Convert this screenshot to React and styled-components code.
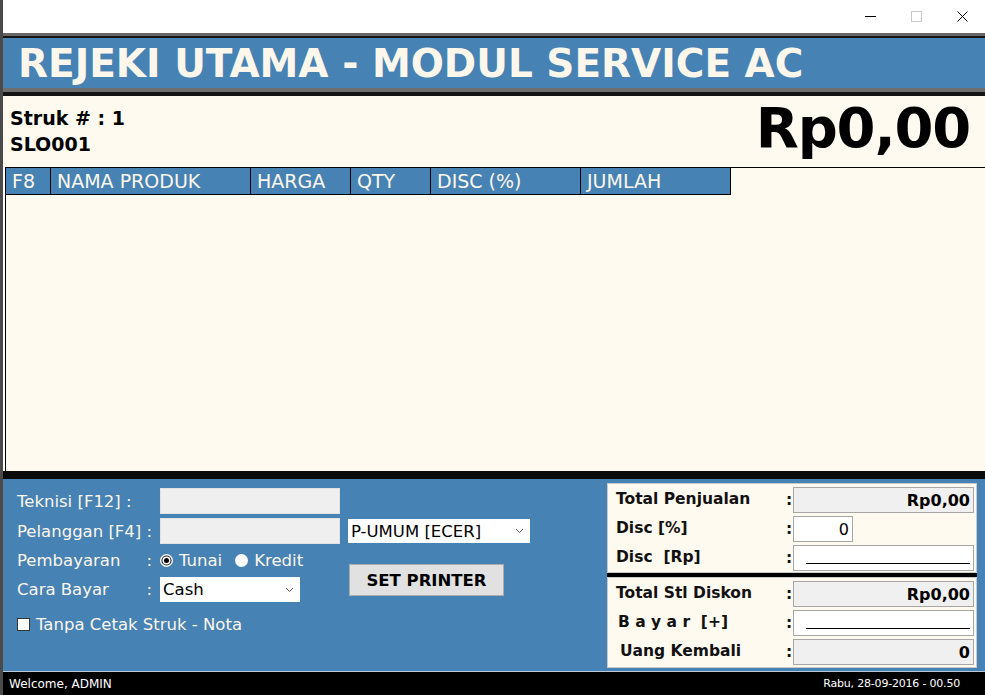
import React from "react";
import styled, { createGlobalStyle } from "styled-components";

const BLUE = "#4682b4";
const CREAM = "#fffaf0";
const LIGHT = "#fdf6ea";

const GlobalStyle = createGlobalStyle`
  html, body { margin: 0; padding: 0; background: #fff; }
  body { font-family: "DejaVu Sans", "Noto Sans", sans-serif; }
  #root { width: 985px; height: 695px; overflow: hidden; }
  * { box-sizing: border-box; }
`;

const Window = styled.div`
  width: 985px;
  height: 695px;
  display: flex;
  flex-direction: column;
  border-left: 3px solid #4a4a4a;
  background: #fff;
`;

const TitleBar = styled.div`
  height: 33px;
  flex: none;
  display: flex;
  justify-content: flex-end;
  background: #fff;
`;

const CtrlBtn = styled.div`
  width: 46px;
  height: 33px;
  display: flex;
  align-items: center;
  justify-content: center;
`;

const Header = styled.div`
  height: 63px;
  flex: none;
  background: ${BLUE};
  border-top: 3px solid #666;
  border-bottom: 4px solid #141414;
  box-shadow: inset 0 2px 0 #141414, inset 0 -4px 0 #6e6e6e;
  display: flex;
  align-items: center;
  padding: 0 0 1px 15px;
`;

const HeaderTitle = styled.h1`
  margin: 0;
  font-family: "DejaVu Sans", sans-serif;
  font-weight: bold;
  font-size: 39px;
  color: ${LIGHT};
  line-height: 1;
`;

const Info = styled.div`
  height: 71px;
  flex: none;
  background: ${CREAM};
  display: flex;
  justify-content: space-between;
  padding: 0 15px 0 7px;
`;

const InfoLeft = styled.div`
  padding-top: 9px;
  display: flex;
  flex-direction: column;
`;

const InfoLine = styled.div`
  font-weight: bold;
  font-size: 19px;
  line-height: 26px;
  color: #000;
`;

const BigTotal = styled.div`
  font-weight: bold;
  font-size: 56px;
  letter-spacing: -1.2px;
  line-height: 1;
  color: #000;
  align-self: center;
  margin-top: -7px;
`;

const GridArea = styled.div`
  flex: 1;
  margin-left: 2px;
  background: ${CREAM};
  border-left: 1px solid #000;
  border-top: 1px solid #000;
`;

const GridHeader = styled.div`
  display: flex;
  width: max-content;
  height: 27px;
  border-bottom: 1px solid #000;
`;

const HeadCell = styled.div`
  width: ${(p) => p.$w}px;
  background: ${BLUE};
  border-right: 1px solid #000;
  color: ${LIGHT};
  font-size: 19px;
  line-height: 26px;
  padding-left: 6px;
  white-space: nowrap;
`;

const BottomPanel = styled.div`
  height: 200px;
  flex: none;
  background: ${BLUE};
  border-top: 8px solid #0a0a0a;
  display: flex;
  justify-content: space-between;
  padding: 4px 8px 0 14px;
`;

const Form = styled.div`
  padding-top: 5px;
  display: flex;
  flex-direction: column;
`;

const FormGrid = styled.div`
  display: grid;
  grid-template-columns: 143px 180px 8px 182px;
  grid-template-rows: 26px 26px 25px 25px;
  row-gap: 4px;
`;

const Label = styled.div`
  grid-column: 1;
  grid-row: ${(p) => p.$row};
  display: flex;
  align-items: center;
  justify-content: space-between;
  padding-right: 8px;
  color: ${LIGHT};
  font-size: 16.5px;
  white-space: nowrap;
`;

const TextBox = styled.div`
  grid-column: 2;
  grid-row: ${(p) => p.$row};
  width: 180px;
  background: #efefef;
  border: 1px solid #e2e2e2;
`;

const Select = styled.div`
  grid-column: ${(p) => p.$col};
  grid-row: ${(p) => p.$row};
  width: ${(p) => p.$w}px;
  height: ${(p) => p.$h}px;
  align-self: center;
  background: #fff;
  display: flex;
  align-items: center;
  justify-content: space-between;
  padding: 0 6px 0 3px;
  color: #000;
  font-size: 16.5px;
  white-space: nowrap;
`;

const RadioGroup = styled.div`
  grid-column: 2;
  grid-row: 3;
  display: flex;
  align-items: center;
  color: ${LIGHT};
  font-size: 16.5px;
  white-space: nowrap;
`;

const RadioItem = styled.label`
  display: flex;
  align-items: center;
  gap: 6px;
  margin-right: 13px;
`;

const RadioDot = styled.span`
  width: 13px;
  height: 13px;
  border-radius: 50%;
  background: #fff;
  display: flex;
  align-items: center;
  justify-content: center;
  &::after {
    content: "";
    display: ${(p) => (p.$checked ? "block" : "none")};
    width: 5px;
    height: 5px;
    border-radius: 50%;
    background: #000;
    box-shadow: 0 0 0 1.5px #fff, 0 0 0 2.6px #222;
  }
`;

const Button = styled.div`
  grid-column: 4;
  grid-row: 3 / span 2;
  align-self: start;
  margin: 16px 0 0 1px;
  width: 155px;
  height: 32px;
  background: #e1e1e1;
  border: 1px solid #adadad;
  display: flex;
  align-items: center;
  justify-content: center;
  font-weight: bold;
  font-size: 16.5px;
  color: #000;
`;

const CheckRow = styled.label`
  margin-top: 13px;
  display: flex;
  align-items: center;
  gap: 6px;
  color: ${LIGHT};
  font-size: 16.5px;
  height: 18px;
`;

const CheckBox = styled.span`
  width: 13px;
  height: 13px;
  background: #fff;
  border: 1px solid #333;
`;

const Summary = styled.div`
  width: 370px;
  height: 185px;
  display: flex;
  flex-direction: column;
`;

const SumBox = styled.div`
  background: ${CREAM};
  border: 1px solid #c9c9c9;
  display: grid;
  grid-template-columns: 170px 7px 181px;
  grid-auto-rows: 26px;
  row-gap: 3px;
  padding: 3px 2px ${(p) => p.$pb}px 8px;
`;

const Divider = styled.div`
  height: 4px;
  background: #000;
`;

const SumLabel = styled.div`
  display: flex;
  align-items: center;
  font-weight: bold;
  font-size: 15.5px;
  color: #111;
  white-space: pre;
  padding-left: ${(p) => p.$indent || 0}px;
  padding-bottom: 2px;
`;

const Colon = styled.div`
  display: flex;
  align-items: center;
  font-weight: bold;
  font-size: 15.5px;
  color: #111;
`;

const Field = styled.div`
  width: ${(p) => p.$w || 181}px;
  background: ${(p) => (p.$gray ? "#f0f0f0" : "#fff")};
  border: 1px solid #a6a6a6;
  display: flex;
  align-items: ${(p) => (p.$line ? "flex-end" : "center")};
  justify-content: flex-end;
  padding: ${(p) => (p.$line ? "0 3px 6px 12px" : "0 3px 0 4px")};
  font-weight: ${(p) => (p.$bold ? "bold" : "normal")};
  font-size: 16px;
  color: #000;
`;

const Blank = styled.span`
  flex: 1;
  border-bottom: 1px solid #000;
`;

const StatusBar = styled.div`
  height: 24px;
  flex: none;
  background: #000;
  border-top: 1px solid #b9c9d8;
  color: #fff;
  font-size: 12px;
  display: flex;
  align-items: center;
  justify-content: space-between;
  padding: 0 25px 0 6px;
`;

const DateText = styled.span`
  font-size: 11px;
  letter-spacing: -0.2px;
`;

const Chevron = () => (
  <svg width="9" height="6" viewBox="0 0 9 6">
    <polyline points="1,1 4.5,4.5 8,1" fill="none" stroke="#555" strokeWidth="1" />
  </svg>
);

const columns = [
  ["F8", 45],
  ["NAMA PRODUK", 200],
  ["HARGA", 100],
  ["QTY", 80],
  ["DISC (%)", 150],
  ["JUMLAH", 150],
];

export default function App() {
  return (
    <>
      <GlobalStyle />
      <Window>
        <TitleBar>
          <CtrlBtn>
            <svg width="11" height="11" viewBox="0 0 11 11">
              <line x1="0" y1="5.5" x2="11" y2="5.5" stroke="#000" strokeWidth="1" />
            </svg>
          </CtrlBtn>
          <CtrlBtn>
            <svg width="11" height="11" viewBox="0 0 11 11">
              <rect x="0.5" y="0.5" width="10" height="10" fill="none" stroke="#c8c8c8" strokeWidth="1" />
            </svg>
          </CtrlBtn>
          <CtrlBtn>
            <svg width="11" height="11" viewBox="0 0 11 11">
              <path d="M0.5 0.5 L10.5 10.5 M10.5 0.5 L0.5 10.5" stroke="#000" strokeWidth="1" />
            </svg>
          </CtrlBtn>
        </TitleBar>

        <Header>
          <HeaderTitle>REJEKI UTAMA - MODUL SERVICE AC</HeaderTitle>
        </Header>

        <Info>
          <InfoLeft>
            <InfoLine>Struk # : 1</InfoLine>
            <InfoLine>SLO001</InfoLine>
          </InfoLeft>
          <BigTotal>Rp0,00</BigTotal>
        </Info>

        <GridArea>
          <GridHeader>
            {columns.map(([name, w]) => (
              <HeadCell key={name} $w={w}>
                {name}
              </HeadCell>
            ))}
          </GridHeader>
        </GridArea>

        <BottomPanel>
          <Form>
            <FormGrid>
              <Label $row={1}>Teknisi [F12] :</Label>
              <TextBox $row={1} />

              <Label $row={2}>Pelanggan [F4] :</Label>
              <TextBox $row={2} />
              <Select $col={4} $row={2} $w={182} $h={24}>
                <span>P-UMUM [ECER]</span>
                <Chevron />
              </Select>

              <Label $row={3}>
                <span>Pembayaran</span>
                <span>:</span>
              </Label>
              <RadioGroup>
                <RadioItem>
                  <RadioDot $checked />
                  Tunai
                </RadioItem>
                <RadioItem>
                  <RadioDot />
                  Kredit
                </RadioItem>
              </RadioGroup>

              <Label $row={4}>
                <span>Cara Bayar</span>
                <span>:</span>
              </Label>
              <Select $col={2} $row={4} $w={140} $h={25}>
                <span>Cash</span>
                <Chevron />
              </Select>

              <Button>SET PRINTER</Button>
            </FormGrid>
            <CheckRow>
              <CheckBox />
              Tanpa Cetak Struk - Nota
            </CheckRow>
          </Form>

          <Summary>
            <SumBox $pb={1}>
              <SumLabel>Total Penjualan</SumLabel>
              <Colon>:</Colon>
              <Field $gray $bold>Rp0,00</Field>

              <SumLabel>Disc [%]</SumLabel>
              <Colon>:</Colon>
              <Field $w={60}>0</Field>

              <SumLabel>{"Disc  [Rp]"}</SumLabel>
              <Colon>:</Colon>
              <Field $line>
                <Blank />
              </Field>
            </SumBox>
            <Divider />
            <SumBox $pb={2}>
              <SumLabel>Total Stl Diskon</SumLabel>
              <Colon>:</Colon>
              <Field $gray $bold>Rp0,00</Field>

              <SumLabel $indent={2}>{"B a y a r  [+]"}</SumLabel>
              <Colon>:</Colon>
              <Field $line>
                <Blank />
              </Field>

              <SumLabel $indent={4}>Uang Kembali</SumLabel>
              <Colon>:</Colon>
              <Field $gray $bold>0</Field>
            </SumBox>
          </Summary>
        </BottomPanel>

        <StatusBar>
          <span>Welcome, ADMIN</span>
          <DateText>Rabu, 28-09-2016 - 00.50</DateText>
        </StatusBar>
      </Window>
    </>
  );
}
